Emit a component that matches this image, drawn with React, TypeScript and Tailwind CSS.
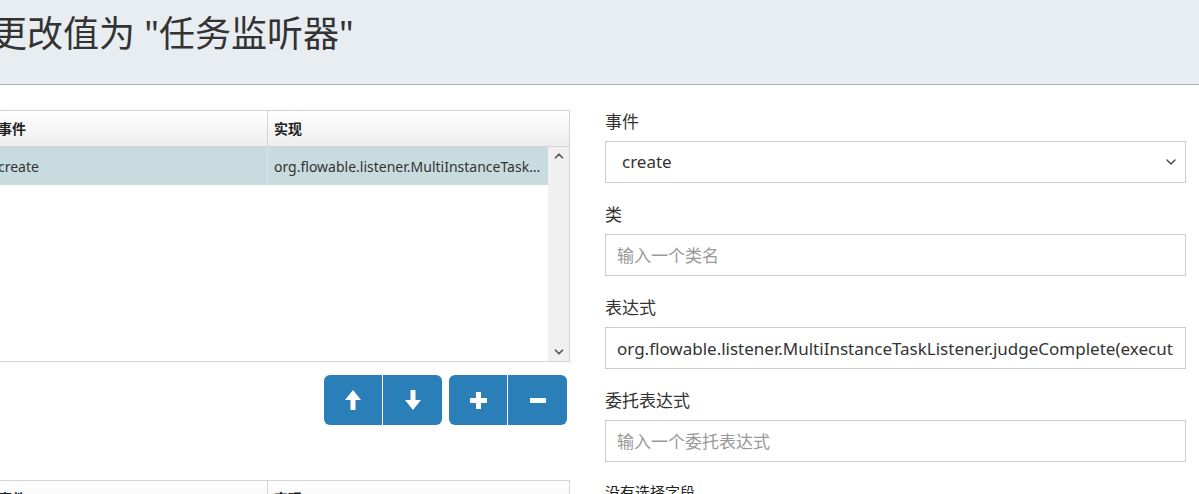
import { ChevronDown, ChevronUp } from "lucide-react";

const FONT = { fontFamily: '"Noto Sans", "Noto Sans CJK SC", sans-serif' };

function ArrowUp() {
  return (
    <svg width="16" height="20" viewBox="0 0 16 20" fill="white">
      <path d="M8 0 L16 10 L10.5 10 L10.5 20 L5.5 20 L5.5 10 L0 10 Z" />
    </svg>
  );
}

function ArrowDown() {
  return (
    <svg width="16" height="20" viewBox="0 0 16 20" fill="white">
      <path d="M8 20 L16 10 L10.5 10 L10.5 0 L5.5 0 L5.5 10 L0 10 Z" />
    </svg>
  );
}

function Plus() {
  return (
    <svg width="17" height="17" viewBox="0 0 17 17" fill="white">
      <rect x="6" y="0" width="5" height="17" />
      <rect x="0" y="6" width="17" height="5" />
    </svg>
  );
}

function Minus() {
  return (
    <svg width="16" height="5" viewBox="0 0 16 5" fill="white">
      <rect x="0" y="0" width="16" height="5" />
    </svg>
  );
}

function GridHeader() {
  return (
    <div className="flex h-[36px] border-b border-[#d4d4d4] bg-gradient-to-b from-white to-[#eeeeee] text-[14px] font-bold text-[#222]">
      <div className="flex w-[277px] items-center border-r border-[#d4d4d4] pl-[7px]">事件</div>
      <div className="flex flex-1 items-center pl-[6px]">实现</div>
    </div>
  );
}

function Field({ label, children }: { label: string; children: React.ReactNode }) {
  return (
    <div className="mb-[20px]">
      <label className="mb-[7px] block h-[24px] text-[17px] leading-[24px] text-[#333]">{label}</label>
      {children}
    </div>
  );
}

export default function App() {
  return (
    <div className="h-[494px] w-[1199px] overflow-hidden bg-white" style={FONT}>
      <div className="h-[85px] border-b border-[#a8b1bc] bg-[#e8edf1]">
        <h2 className="-ml-[9px] whitespace-nowrap pt-[10px] text-[36px] leading-[48px] text-[#333]">
          更改值为 "任务监听器"
        </h2>
      </div>

      <div className="-ml-[10px] flex gap-[35px] pt-[25px]">
        {/* listener grid */}
        <div className="w-[580px] shrink-0">
          <div className="h-[252px] border border-[#d4d4d4]">
            <GridHeader />
            <div className="flex h-[214px]">
              <div className="min-w-0 flex-1">
                <div className="flex h-[38px] bg-[#c8dce0] text-[14px] text-[#333]">
                  <div className="flex w-[277px] shrink-0 items-center border-r border-[#d8e6e9] pl-[7px]">create</div>
                  <div className="flex min-w-0 flex-1 items-center pl-[6px] pr-[6px]">
                    <span className="truncate">org.flowable.listener.MultiInstanceTaskListener</span>
                  </div>
                </div>
              </div>
              <div className="flex w-[21px] shrink-0 flex-col items-center justify-between bg-[#f0f0f0] py-[2px] text-[#555]">
                <ChevronUp size={14} strokeWidth={3} />
                <ChevronDown size={14} strokeWidth={3} />
              </div>
            </div>
          </div>

          <div className="mt-[13px] flex justify-end gap-[7px] pr-[3px]">
            <div className="flex overflow-hidden rounded-[6px]">
              <button className="flex h-[50px] w-[59px] items-center justify-center border-r border-white bg-[#2a7fb9]">
                <ArrowUp />
              </button>
              <button className="flex h-[50px] w-[59px] items-center justify-center bg-[#2a7fb9]">
                <ArrowDown />
              </button>
            </div>
            <div className="flex overflow-hidden rounded-[6px]">
              <button className="flex h-[50px] w-[59px] items-center justify-center border-r border-white bg-[#2a7fb9]">
                <Plus />
              </button>
              <button className="flex h-[50px] w-[59px] items-center justify-center bg-[#2a7fb9]">
                <Minus />
              </button>
            </div>
          </div>

          <div className="mt-[55px] border border-[#d4d4d4]">
            <GridHeader />
          </div>
        </div>

        {/* listener details */}
        <div className="w-[581px] shrink-0">
          <Field label="事件">
            <div className="flex h-[42px] items-center justify-between border border-[#cccccc] pl-[16px] pr-[6px] text-[17px] text-[#333]">
              <span>create</span>
              <ChevronDown size={16} strokeWidth={2} className="text-[#444]" />
            </div>
          </Field>
          <Field label="类">
            <input
              className="block h-[42px] w-full border border-[#cccccc] px-[11px] text-[17px] text-[#333] outline-none placeholder:text-[#999]"
              placeholder="输入一个类名"
            />
          </Field>
          <Field label="表达式">
            <input
              className="block h-[42px] w-full border border-[#cccccc] px-[11px] text-[17px] text-[#333] outline-none"
              defaultValue="org.flowable.listener.MultiInstanceTaskListener.judgeComplete(execution)"
            />
          </Field>
          <Field label="委托表达式">
            <input
              className="block h-[42px] w-full border border-[#cccccc] px-[11px] text-[17px] text-[#333] outline-none placeholder:text-[#999]"
              placeholder="输入一个委托表达式"
            />
          </Field>
          <div className="-mt-[2px] text-[15px] leading-[24px] text-[#222]">没有选择字段</div>
        </div>
      </div>
    </div>
  );
}
